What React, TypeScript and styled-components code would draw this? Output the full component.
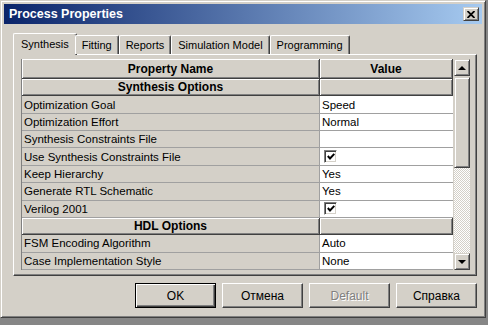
import React from 'react';
import styled, { createGlobalStyle } from 'styled-components';

const GlobalStyle = createGlobalStyle`
  html, body {
    margin: 0;
    padding: 0;
  }
  body {
    width: 488px;
    height: 325px;
    overflow: hidden;
    background: #868686;
    font-family: "Liberation Sans", Arial, sans-serif;
    font-size: 11.5px;
    color: #000;
  }
  * {
    box-sizing: border-box;
  }
`;

const raised = `
  background: #d4d0c8;
  border-top: 1px solid #d4d0c8;
  border-left: 1px solid #d4d0c8;
  border-right: 1px solid #404040;
  border-bottom: 1px solid #404040;
  box-shadow: inset 1px 1px #fff, inset -1px -1px #808080;
`;

const Window = styled.div`
  ${raised}
  width: 486px;
  height: 318px;
  padding: 3px;
  display: flex;
  flex-direction: column;
`;

const TitleBar = styled.div`
  height: 20px;
  display: flex;
  align-items: center;
  justify-content: space-between;
  padding: 0 3px 0 5px;
  background: linear-gradient(to right, #0a246a, #a6caf0);
`;

const Title = styled.span`
  color: #fff;
  font-weight: bold;
  font-size: 12.5px;
`;

const CloseButton = styled.div`
  ${raised}
  width: 16px;
  height: 14px;
  display: flex;
  align-items: center;
  justify-content: center;
`;

const Body = styled.div`
  display: flex;
  flex-direction: column;
  padding: 9px 5px 0 9px;
`;

const TabRow = styled.div`
  height: 21px;
  display: flex;
  align-items: flex-start;
  padding-left: 2px;
  position: relative;
  z-index: 1;
`;

const Tab = styled.div<{ $active?: boolean }>`
  height: ${(p) => (p.$active ? 22 : 19)}px;
  margin-top: ${(p) => (p.$active ? 0 : 2)}px;
  margin-left: ${(p) => (p.$active ? -2 : 0)}px;
  margin-right: ${(p) => (p.$active ? -2 : 0)}px;
  padding: 0 ${(p) => (p.$active ? 7 : 6)}px ${(p) => (p.$active ? 2 : 0)}px;
  display: flex;
  align-items: center;
  font-size: 11px;
  background: #d4d0c8;
  border-top: 1px solid #fff;
  border-left: 1px solid #fff;
  border-right: 1px solid #404040;
  border-radius: 2px 2px 0 0;
  box-shadow: inset -1px 0 #808080;
  white-space: nowrap;
`;

const Panel = styled.div`
  width: 464px;
  height: 222px;
  padding: 4px 6px 5px 7px;
  display: flex;
  background: #d4d0c8;
  border-top: 1px solid #fff;
  border-left: 1px solid #fff;
  border-right: 1px solid #404040;
  border-bottom: 1px solid #404040;
  box-shadow: inset -1px -1px #808080;
`;

const Table = styled.div`
  width: 432px;
  height: 211px;
  display: grid;
  grid-template-columns: 298px 133px;
  grid-template-rows: 20px repeat(11, 1fr);
  border-left: 1px solid #808080;
`;

const HeadCell = styled.div`
  ${raised}
  border-top: none;
  border-left: none;
  display: flex;
  align-items: center;
  justify-content: center;
  font-weight: bold;
  font-size: 12px;
`;

const NameCell = styled.div`
  background: #d4d0c8;
  border-right: 1px solid #a0a0a0;
  border-bottom: 1px solid #a0a0a0;
  padding-left: 2px;
  display: flex;
  align-items: center;
  white-space: nowrap;
`;

const ValueCell = styled.div`
  background: #fff;
  border-bottom: 1px solid #a0a0a0;
  padding-left: 2px;
  display: flex;
  align-items: center;
`;

const CheckBox = styled.div`
  width: 13px;
  height: 13px;
  margin-left: 2px;
  background: #fff;
  border-top: 1px solid #808080;
  border-left: 1px solid #808080;
  border-right: 1px solid #fff;
  border-bottom: 1px solid #fff;
  box-shadow: inset 1px 1px #404040, inset -1px -1px #d4d0c8;
  display: flex;
  align-items: center;
  justify-content: center;
`;

const Scrollbar = styled.div`
  width: 17px;
  height: 211px;
  margin-left: 1px;
  display: flex;
  flex-direction: column;
`;

const ScrollButton = styled.div`
  ${raised}
  height: 17px;
  display: flex;
  align-items: center;
  justify-content: center;
`;

const Arrow = styled.div<{ $down?: boolean }>`
  width: 0;
  height: 0;
  border-left: 4px solid transparent;
  border-right: 4px solid transparent;
  ${(p) => (p.$down ? 'border-top: 4px solid #000;' : 'border-bottom: 4px solid #000;')}
`;

const Thumb = styled.div`
  ${raised}
  height: 91px;
  margin-top: 1px;
`;

const Track = styled.div`
  flex: 1;
  background: repeating-conic-gradient(#fff 0 25%, #d4d0c8 0 50%) 0 0 / 2px 2px;
`;

const ButtonRow = styled.div`
  width: 464px;
  margin-top: 7px;
  display: flex;
  justify-content: flex-end;
  gap: 6px;
`;

const Button = styled.div<{ $default?: boolean; $disabled?: boolean }>`
  width: 81px;
  height: 25px;
  display: flex;
  align-items: center;
  justify-content: center;
  font-size: 12px;
  background: #d4d0c8;
  ${(p) =>
    p.$default
      ? `border: 1px solid #000;
         box-shadow: inset 1px 1px #fff, inset -1px -1px #404040, inset -2px -2px #808080;`
      : `border-top: 1px solid #fff;
         border-left: 1px solid #fff;
         border-right: 1px solid #404040;
         border-bottom: 1px solid #404040;
         box-shadow: inset -1px -1px #808080;`}
  color: ${(p) => (p.$disabled ? '#808080' : '#000')};
  text-shadow: ${(p) => (p.$disabled ? '1px 1px #fff' : 'none')};
`;

type Row =
  | { kind: 'cat'; name: string }
  | { kind: 'text'; name: string; value: string }
  | { kind: 'check'; name: string };

const rows: Row[] = [
  { kind: 'cat', name: 'Synthesis Options' },
  { kind: 'text', name: 'Optimization Goal', value: 'Speed' },
  { kind: 'text', name: 'Optimization Effort', value: 'Normal' },
  { kind: 'text', name: 'Synthesis Constraints File', value: '' },
  { kind: 'check', name: 'Use Synthesis Constraints File' },
  { kind: 'text', name: 'Keep Hierarchy', value: 'Yes' },
  { kind: 'text', name: 'Generate RTL Schematic', value: 'Yes' },
  { kind: 'check', name: 'Verilog 2001' },
  { kind: 'cat', name: 'HDL Options' },
  { kind: 'text', name: 'FSM Encoding Algorithm', value: 'Auto' },
  { kind: 'text', name: 'Case Implementation Style', value: 'None' },
];

const tabs = ['Synthesis', 'Fitting', 'Reports', 'Simulation Model', 'Programming'];

const Check = () => (
  <svg width="8" height="7" viewBox="0 0 8 7">
    <path d="M0.8 3 L3 5.5 L7.3 0.8" fill="none" stroke="#000" strokeWidth="1.9" />
  </svg>
);

const CloseIcon = () => (
  <svg width="8" height="7" viewBox="0 0 8 7">
    <path d="M0.5 0 L7.5 7 M7.5 0 L0.5 7" stroke="#000" strokeWidth="1.8" />
  </svg>
);

export default function App() {
  return (
    <>
      <GlobalStyle />
      <Window>
        <TitleBar>
          <Title>Process Properties</Title>
          <CloseButton>
            <CloseIcon />
          </CloseButton>
        </TitleBar>
        <Body>
          <TabRow>
            {tabs.map((t, i) => (
              <Tab key={t} $active={i === 0}>
                {t}
              </Tab>
            ))}
          </TabRow>
          <Panel>
            <Table>
              <HeadCell>Property Name</HeadCell>
              <HeadCell>Value</HeadCell>
              {rows.map((r) =>
                r.kind === 'cat' ? (
                  <React.Fragment key={r.name}>
                    <HeadCell>{r.name}</HeadCell>
                    <HeadCell />
                  </React.Fragment>
                ) : (
                  <React.Fragment key={r.name}>
                    <NameCell>{r.name}</NameCell>
                    <ValueCell>
                      {r.kind === 'check' ? (
                        <CheckBox>
                          <Check />
                        </CheckBox>
                      ) : (
                        r.value
                      )}
                    </ValueCell>
                  </React.Fragment>
                ),
              )}
            </Table>
            <Scrollbar>
              <ScrollButton>
                <Arrow />
              </ScrollButton>
              <Thumb />
              <Track />
              <ScrollButton>
                <Arrow $down />
              </ScrollButton>
            </Scrollbar>
          </Panel>
          <ButtonRow>
            <Button $default>OK</Button>
            <Button>Отмена</Button>
            <Button $disabled>Default</Button>
            <Button>Справка</Button>
          </ButtonRow>
        </Body>
      </Window>
    </>
  );
}
